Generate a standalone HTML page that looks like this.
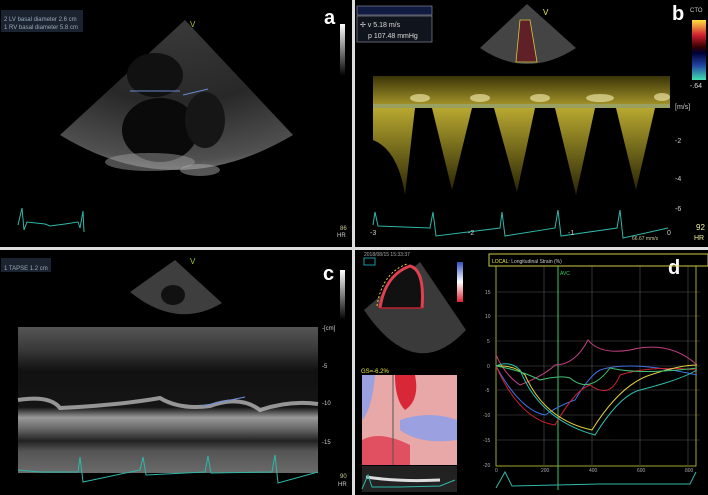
<!DOCTYPE html>
<html><head><meta charset="utf-8"><style>
html,body{margin:0;padding:0;background:#fff;width:708px;height:495px;overflow:hidden}
svg{display:block}
text{font-family:"Liberation Sans",sans-serif}
</style></head><body>
<svg width="708" height="495" viewBox="0 0 708 495" xmlns="http://www.w3.org/2000/svg">
<defs>
<radialGradient id="sec" cx="0.5" cy="0" r="1.1">
<stop offset="0" stop-color="#3a3a3a"/><stop offset="0.5" stop-color="#282828"/><stop offset="0.85" stop-color="#505050"/><stop offset="1" stop-color="#8a8a8a"/>
</radialGradient>
<linearGradient id="gs" x1="0" y1="0" x2="0" y2="1"><stop offset="0" stop-color="#fff"/><stop offset="1" stop-color="#000"/></linearGradient>
<linearGradient id="cb" x1="0" y1="0" x2="0" y2="1"><stop offset="0" stop-color="#ffe040"/><stop offset="0.25" stop-color="#d02030"/><stop offset="0.45" stop-color="#300"/><stop offset="0.55" stop-color="#003"/><stop offset="0.75" stop-color="#2040a0"/><stop offset="1" stop-color="#40e0b0"/></linearGradient>
<linearGradient id="mm" x1="0" y1="0" x2="0" y2="1">
<stop offset="0" stop-color="#555"/><stop offset="0.15" stop-color="#3a3a3a"/><stop offset="0.3" stop-color="#111"/><stop offset="0.55" stop-color="#151515"/><stop offset="0.62" stop-color="#999"/><stop offset="0.7" stop-color="#666"/><stop offset="0.78" stop-color="#222"/><stop offset="0.85" stop-color="#555"/><stop offset="1" stop-color="#6a6a6a"/></linearGradient>
<linearGradient id="yb" x1="0" y1="0" x2="0" y2="1"><stop offset="0" stop-color="#3a3408"/><stop offset="1" stop-color="#a09028"/></linearGradient>
<linearGradient id="yt" x1="0" y1="0" x2="0" y2="1"><stop offset="0" stop-color="#b8a830"/><stop offset="1" stop-color="#2a2606"/></linearGradient>
<linearGradient id="rb" x1="0" y1="0" x2="0" y2="1"><stop offset="0" stop-color="#3050c0"/><stop offset="0.5" stop-color="#fff"/><stop offset="1" stop-color="#e02030"/></linearGradient>
</defs>
<rect width="708" height="495" fill="#fff"/>
<!-- Panel a -->
<rect x="0" y="0" width="352" height="247" fill="#000"/>
<rect x="1" y="10" width="82" height="22" fill="#1b2230"/>
<text x="4" y="21" font-size="6" fill="#9ab">2 LV basal diameter   2.6 cm</text>
<text x="4" y="29" font-size="6" fill="#9ab">1 RV basal diameter   5.8 cm</text>
<path d="M185,20 L60,135 Q175,205 293,135 Z" fill="url(#sec)"/>
<ellipse cx="160" cy="130" rx="38" ry="32" fill="#0a0a0a"/>
<ellipse cx="155" cy="75" rx="28" ry="22" fill="#111"/>
<ellipse cx="205" cy="120" rx="20" ry="28" fill="#161616"/>
<ellipse cx="150" cy="162" rx="45" ry="9" fill="#999" opacity="0.5"/>
<ellipse cx="200" cy="170" rx="20" ry="6" fill="#aaa" opacity="0.5"/>
<line x1="130" y1="91" x2="180" y2="91" stroke="#6a8ad0" stroke-width="1"/>
<line x1="183" y1="95" x2="208" y2="89" stroke="#6a8ad0" stroke-width="1"/>
<text x="190" y="27" font-size="8" fill="#9c3">V</text>
<text x="324" y="24" font-size="20" font-weight="bold" fill="#fff">a</text>
<rect x="340" y="24" width="5" height="52" fill="url(#gs)"/>
<polyline points="18,225 22,208 24,230 27,222 45,224 50,226 65,224 78,222 80,228 83,211 84,232" fill="none" stroke="#2fb8a8" stroke-width="1"/>
<text x="340" y="230" font-size="6" fill="#cc9">86</text><text x="337" y="237" font-size="6" fill="#ccc">HR</text>
<!-- Panel b -->
<rect x="355" y="0" width="353" height="247" fill="#000"/>
<rect x="357" y="6" width="75" height="9" fill="#111a40" stroke="#99a" stroke-width="0.6"/>
<rect x="357" y="16" width="75" height="26" fill="#10141c" stroke="#99a" stroke-width="0.6"/>
<text x="360" y="27" font-size="7" fill="#ddd">✢ v        5.18 m/s</text>
<text x="368" y="38" font-size="7" fill="#ddd">p  107.48 mmHg</text>
<path d="M527,4 L480,48 Q527,80 576,48 Z" fill="#444"/>
<path d="M520,20 L516,62 L537,62 L530,20 Z" fill="#602028" stroke="#cc4" stroke-width="0.8"/>
<text x="543" y="15" font-size="8" fill="#ee4">V</text>
<text x="672" y="20" font-size="20" font-weight="bold" fill="#fff">b</text>
<text x="690" y="12" font-size="6" fill="#ccc">CTO</text>
<rect x="692" y="20" width="14" height="60" fill="url(#cb)"/>
<text x="690" y="88" font-size="7" fill="#ddd">-.64</text>
<rect x="373" y="76" width="297" height="28" fill="url(#yb)"/>
<g fill="#e8e0a0" opacity="0.7"><ellipse cx="420" cy="98" rx="10" ry="4"/><ellipse cx="480" cy="98" rx="10" ry="4"/><ellipse cx="540" cy="98" rx="10" ry="4"/><ellipse cx="600" cy="98" rx="14" ry="4"/><ellipse cx="662" cy="97" rx="8" ry="4"/></g>
<rect x="373" y="104" width="297" height="4" fill="#99a060"/>
<rect x="373" y="108" width="297" height="95" fill="#000"/>
<g fill="url(#yt)">
<path d="M373,108 L415,108 L405,195 Q398,150 373,140 Z"/>
<path d="M432,108 L472,108 L452,190 Z"/>
<path d="M494,108 L535,108 L517,192 Z"/>
<path d="M555,108 L595,108 L576,195 Z"/>
<path d="M616,108 L655,108 L636,190 Z"/>
</g>
<text x="675" y="109" font-size="7" fill="#ccc">[m/s]</text>
<text x="675" y="143" font-size="7" fill="#ccc">-2</text>
<text x="675" y="181" font-size="7" fill="#ccc">-4</text>
<text x="675" y="211" font-size="7" fill="#ccc">-6</text>
<polyline points="373,225 375,212 378,226 430,228 433,212 436,236 500,228 502,212 505,236 555,228 558,210 561,236 617,228 620,210 623,238 668,228" fill="none" stroke="#2fb8a8" stroke-width="1"/>
<text x="370" y="235" font-size="7" fill="#ccc">-3</text><text x="468" y="235" font-size="7" fill="#ccc">-2</text><text x="568" y="235" font-size="7" fill="#ccc">-1</text><text x="667" y="235" font-size="7" fill="#ccc">0</text>
<text x="632" y="240" font-size="5" fill="#cc9">66.67 mm/s</text>
<text x="696" y="230" font-size="8" fill="#ee9">92</text><text x="694" y="240" font-size="7" fill="#ee9">HR</text>
<!-- Panel c -->
<rect x="0" y="250" width="352" height="245" fill="#000"/>
<rect x="1" y="258" width="50" height="14" fill="#1b2230"/>
<text x="4" y="270" font-size="6" fill="#9ab">1 TAPSE   1.2 cm</text>
<path d="M175,260 L130,292 Q177,330 222,303 Z" fill="#3e3e3e"/>
<ellipse cx="173" cy="295" rx="12" ry="10" fill="#111"/>
<text x="190" y="264" font-size="8" fill="#9c3">V</text>
<text x="323" y="280" font-size="20" font-weight="bold" fill="#fff">c</text>
<rect x="340" y="270" width="5" height="50" fill="url(#gs)"/>
<rect x="18" y="327" width="300" height="146" fill="url(#mm)"/>
<path d="M18,400 Q50,395 60,408 Q120,405 160,398 Q180,410 210,406 Q240,395 260,410 Q290,400 318,404" fill="none" stroke="#ccc" stroke-width="4" opacity="0.7"/>
<line x1="202" y1="406" x2="245" y2="397" stroke="#7090e0" stroke-width="1"/>
<text x="322" y="330" font-size="6" fill="#ccc">-[cm]</text>
<text x="322" y="368" font-size="6" fill="#ccc">-5</text><text x="322" y="405" font-size="6" fill="#ccc">-10</text><text x="322" y="444" font-size="6" fill="#ccc">-15</text>
<polyline points="18,470 40,472 78,472 80,457 83,482 140,470 143,457 146,475 205,472 208,456 211,473 272,472 275,455 278,483 318,472" fill="none" stroke="#2fb8a8" stroke-width="1"/>
<text x="340" y="478" font-size="6" fill="#cc9">90</text><text x="338" y="486" font-size="6" fill="#ccc">HR</text>
<!-- Panel d -->
<rect x="355" y="250" width="353" height="245" fill="#000"/>
<text x="364" y="256" font-size="5" fill="#aaa">2018/08/15 15:33:37</text>
<rect x="364" y="258" width="11" height="7" fill="none" stroke="#2bc" stroke-width="0.8"/>
<path d="M420,262 L364,310 Q415,385 466,330 Z" fill="#3a3a3a"/>
<path d="M380,308 Q385,275 410,266 Q425,270 422,308" fill="#111" stroke="#e04050" stroke-width="3"/>
<path d="M380,308 Q385,275 410,266" fill="none" stroke="#e0d040" stroke-width="1" stroke-dasharray="2 2" transform="translate(-3,-2)"/>
<line x1="380" y1="308" x2="422" y2="308" stroke="#c02030" stroke-width="1.5"/>
<rect x="457" y="262" width="6" height="40" fill="url(#rb)"/>
<text x="361" y="373" font-size="6" fill="#ee4">GS=-6.2%</text>
<rect x="362" y="375" width="95" height="90" fill="#e8a8a8"/>
<path d="M362,375 L375,375 Q372,410 362,420 Z" fill="#9aa0e0"/>
<path d="M400,420 Q430,410 457,420 L457,440 Q420,445 400,430 Z" fill="#9aa0e0"/>
<path d="M362,440 Q380,430 410,445 L410,465 L362,465 Z" fill="#e05060"/>
<path d="M395,375 L415,375 Q420,400 405,410 Q395,400 395,375 Z" fill="#d82838"/>
<line x1="393" y1="375" x2="393" y2="465" stroke="#555" stroke-width="1"/>
<rect x="362" y="466" width="95" height="26" fill="#222"/>
<path d="M366,477 Q400,482 440,480" stroke="#ddd" stroke-width="3" fill="none"/>
<polyline points="362,489 368,475 372,487 400,487 440,486 455,480" fill="none" stroke="#2fb8a8" stroke-width="1"/>
<!-- strain graph -->
<rect x="489" y="254" width="219" height="12" fill="none" stroke="#cc4" stroke-width="1"/>
<text x="492" y="263" font-size="5" fill="#ee4">LOCAL: <tspan fill="#ccc">Longitudinal Strain (%)</tspan></text>
<text x="668" y="274" font-size="20" font-weight="bold" fill="#fff">d</text>
<g stroke="#555" stroke-width="0.6">
<line x1="497" y1="292" x2="700" y2="292"/><line x1="497" y1="316" x2="700" y2="316"/><line x1="497" y1="341" x2="700" y2="341"/><line x1="497" y1="366" x2="700" y2="366"/><line x1="497" y1="390" x2="700" y2="390"/><line x1="497" y1="415" x2="700" y2="415"/><line x1="497" y1="440" x2="700" y2="440"/>
<line x1="544" y1="266" x2="544" y2="465"/><line x1="592" y1="266" x2="592" y2="465"/><line x1="640" y1="266" x2="640" y2="465"/><line x1="688" y1="266" x2="688" y2="465"/>
</g>
<rect x="496" y="266" width="200" height="200" fill="none" stroke="#cc4" stroke-width="0.8"/>
<line x1="558" y1="266" x2="558" y2="490" stroke="#3c6" stroke-width="1"/>
<text x="560" y="275" font-size="5" fill="#3c6">AVC</text>
<g font-size="5" fill="#aaa"><text x="485" y="294">15</text><text x="485" y="318">10</text><text x="487" y="343">5</text><text x="487" y="368">0</text><text x="485" y="392">-5</text><text x="483" y="417">-10</text><text x="483" y="442">-15</text><text x="483" y="467">-20</text>
<text x="495" y="472">0</text><text x="541" y="472">200</text><text x="589" y="472">400</text><text x="637" y="472">600</text><text x="685" y="472">800</text></g>
<g fill="none" stroke-width="1">
<path d="M496,355 Q505,375 520,385 Q545,375 555,365 Q575,365 588,340 Q600,355 630,350 Q670,340 697,365" stroke="#c04080"/>
<path d="M496,366 Q520,410 545,415 Q560,405 575,400 Q590,375 600,370 Q630,360 697,375" stroke="#4070e0"/>
<path d="M496,366 Q520,420 555,425 Q575,390 590,385 Q610,400 620,375 Q650,365 697,370" stroke="#d02030"/>
<path d="M496,366 Q515,365 525,375 Q545,420 592,430 Q620,385 650,375 Q680,365 697,365" stroke="#e0d040"/>
<path d="M496,366 Q510,360 520,370 Q540,420 595,435 Q620,395 640,390 Q680,380 697,370" stroke="#30c0b0"/>
<path d="M496,366 Q520,370 540,380 Q560,375 570,378 Q590,395 610,368 Q640,375 697,368" stroke="#40c070"/>
</g>
<polyline points="496,488 505,472 512,486 600,484 690,484 696,472" fill="none" stroke="#2fb8a8" stroke-width="1"/>
<!-- borders -->
<rect x="0" y="247" width="708" height="3" fill="#ddd"/>
<rect x="352" y="0" width="3" height="495" fill="#ddd"/>
</svg>
</body></html>
